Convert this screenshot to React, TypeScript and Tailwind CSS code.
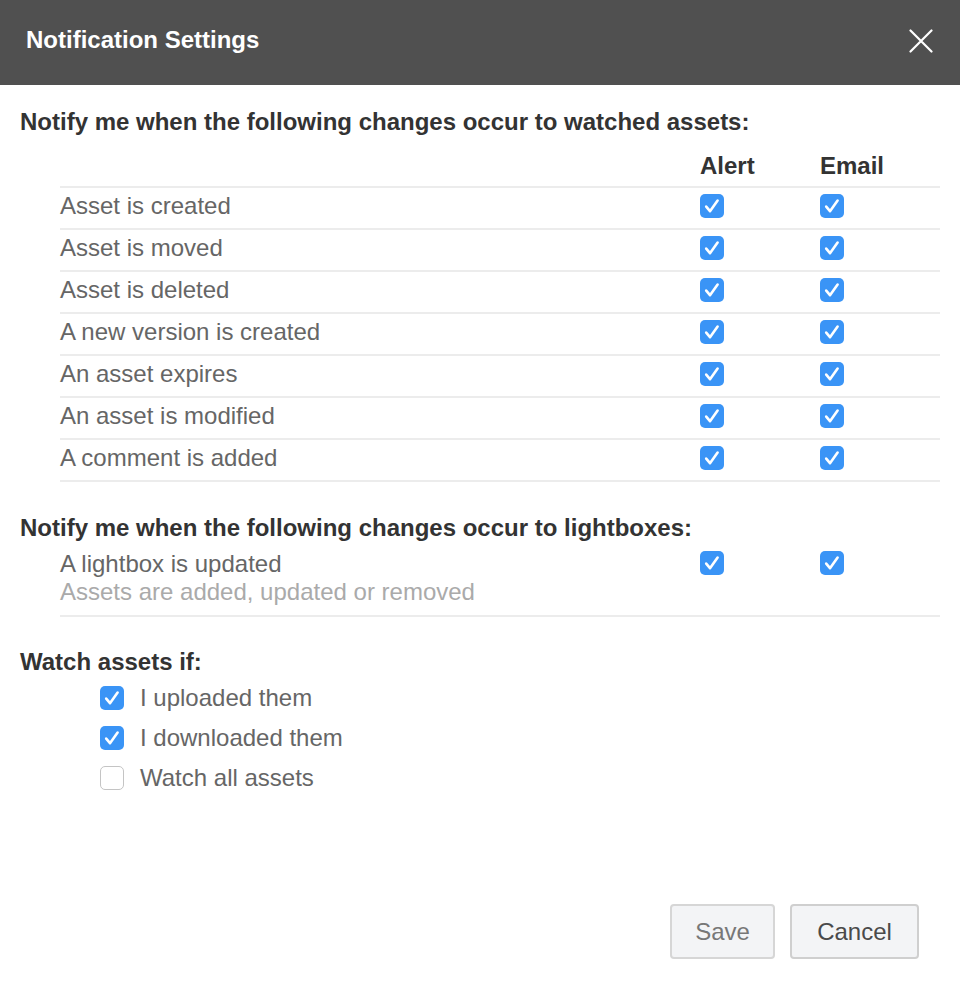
import { useState } from "react";

const assetEvents = [
  "Asset is created",
  "Asset is moved",
  "Asset is deleted",
  "A new version is created",
  "An asset expires",
  "An asset is modified",
  "A comment is added",
];

function Check({ checked, onChange }: { checked: boolean; onChange: () => void }) {
  return (
    <button
      type="button"
      onClick={onChange}
      className={
        checked
          ? "w-6 h-6 rounded-[5px] bg-[#3a94f6] flex items-center justify-center shrink-0"
          : "w-6 h-6 rounded-[5px] bg-white border border-[#c4c4c4] shrink-0"
      }
    >
      {checked && (
        <svg width="24" height="24" viewBox="0 0 24 24" fill="none">
          <path d="M6.2 12.6 L10 17.2 L17.6 6.6" stroke="white" strokeWidth="2.6" strokeLinecap="round" strokeLinejoin="round" />
        </svg>
      )}
    </button>
  );
}

export default function App() {
  const [alerts, setAlerts] = useState<boolean[]>(assetEvents.map(() => true));
  const [emails, setEmails] = useState<boolean[]>(assetEvents.map(() => true));
  const [lightbox, setLightbox] = useState({ alert: true, email: true });
  const [watch, setWatch] = useState([true, true, false]);

  const flip = (arr: boolean[], i: number) => arr.map((v, j) => (j === i ? !v : v));

  return (
    <div className="w-[960px] h-[1002px] bg-white flex flex-col font-['Liberation_Sans',Arial,sans-serif]">
      {/* Header */}
      <div className="h-[85px] bg-[#505050] flex items-center justify-between pl-[26px] pr-[26px] shrink-0">
        <div className="text-white text-[24px] font-bold leading-[28px] pb-[6px]">Notification Settings</div>
        <button type="button" className="w-[24px] h-[24px] flex items-center justify-center mr-[1px] mb-[4px]">
          <svg width="24" height="24" viewBox="0 0 24 24">
            <path d="M1.5 1.5 L22.5 22.5 M22.5 1.5 L1.5 22.5" stroke="white" strokeWidth="2.2" strokeLinecap="round" />
          </svg>
        </button>
      </div>

      <div className="flex-1 px-5 pt-[23px] flex flex-col">
        <div className="text-[24px] font-bold text-[#333] leading-[28px]">
          Notify me when the following changes occur to watched assets:
        </div>

        <div className="pl-10 mt-[16px]">
          <div className="grid grid-cols-[640px_120px_1fr] h-[36px] text-[24px] font-bold text-[#333] leading-[28px] border-b-2 border-[#ececec]">
            <div />
            <div>Alert</div>
            <div>Email</div>
          </div>
          {assetEvents.map((label, i) => (
            <div
              key={label}
              className="grid grid-cols-[640px_120px_1fr] h-[42px] pb-[4px] items-center border-b-2 border-[#ececec] text-[24px] leading-[28px] text-[#666]"
            >
              <div>{label}</div>
              <Check checked={alerts[i]} onChange={() => setAlerts(flip(alerts, i))} />
              <Check checked={emails[i]} onChange={() => setEmails(flip(emails, i))} />
            </div>
          ))}
        </div>

        <div className="text-[24px] font-bold text-[#333] leading-[28px] mt-[32px]">
          Notify me when the following changes occur to lightboxes:
        </div>
        <div className="pl-10">
          <div className="grid grid-cols-[640px_120px_1fr] pt-[8px] pb-[9px] border-b-2 border-[#ececec]">
            <div className="text-[24px] leading-[28px]">
              <div className="text-[#666]">A lightbox is updated</div>
              <div className="text-[#aaa]">Assets are added, updated or removed</div>
            </div>
            <div className="pt-[1px]">
              <Check checked={lightbox.alert} onChange={() => setLightbox({ ...lightbox, alert: !lightbox.alert })} />
            </div>
            <div className="pt-[1px]">
              <Check checked={lightbox.email} onChange={() => setLightbox({ ...lightbox, email: !lightbox.email })} />
            </div>
          </div>
        </div>

        <div className="text-[24px] font-bold text-[#333] leading-[28px] mt-[31px]">Watch assets if:</div>
        <div className="pl-20 flex flex-col gap-4 mt-[10px]">
          {["I uploaded them", "I downloaded them", "Watch all assets"].map((label, i) => (
            <div key={label} className="flex items-center gap-4 h-6">
              <Check checked={watch[i]} onChange={() => setWatch(flip(watch, i))} />
              <span className="text-[24px] leading-[28px] text-[#666]">{label}</span>
            </div>
          ))}
        </div>

        <div className="mt-auto mb-[43px] flex justify-end gap-[15px] pr-[21px]">
          <button
            type="button"
            className="w-[105px] h-[55px] rounded-[4px] border-2 border-[#d6d6d6] bg-[#f3f4f6] text-[24px] text-[#777]"
          >
            Save
          </button>
          <button
            type="button"
            className="w-[129px] h-[55px] rounded-[4px] border-2 border-[#cfcfcf] bg-[#f3f4f6] text-[24px] text-[#4a4a4a]"
          >
            Cancel
          </button>
        </div>
      </div>
    </div>
  );
}
